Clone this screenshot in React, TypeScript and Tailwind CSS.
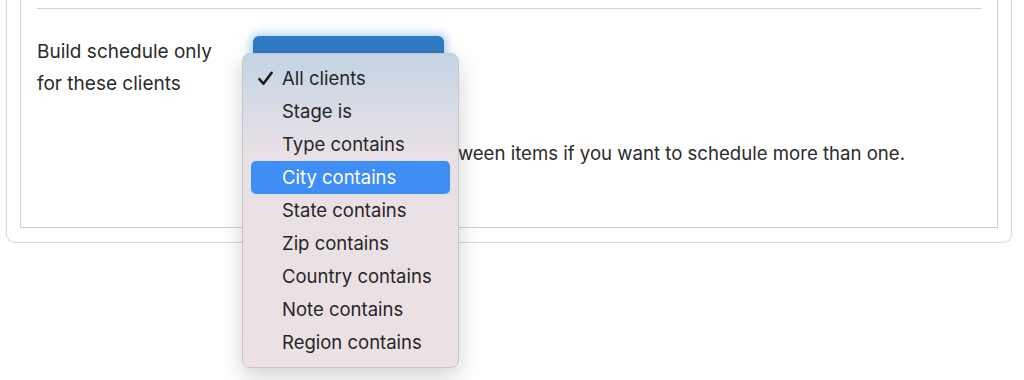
import React from "react";

const options = [
  "All clients",
  "Stage is",
  "Type contains",
  "City contains",
  "State contains",
  "Zip contains",
  "Country contains",
  "Note contains",
  "Region contains",
];

function ClientMenu() {
  return (
    <div className="absolute left-[242px] top-[53px] w-[217px] rounded-[8px] border border-[#c8c4c8] bg-[linear-gradient(180deg,#c3d4e4_0%,#d6dbe5_16%,#e8e0e5_32%,#ece1e5_100%)] py-[8px] text-[18.5px] shadow-[0_8px_22px_rgba(0,0,0,0.18)]">
      {options.map((opt, i) => {
        const selected = opt === "City contains";
        return (
          <div
            key={opt}
            className={`mx-[8px] flex h-[33px] items-center rounded-[5px] pl-[31px] ${
              selected ? "bg-[#3f8ef6] text-white" : "text-[#262626]"
            }`}
          >
            {i === 0 && (
              <svg
                className="-ml-[24px] mr-[9px]"
                width="15"
                height="15"
                viewBox="0 0 14 14"
              >
                <path
                  d="M1.3 7.6 L5.1 11.9 L12.7 1.7"
                  fill="none"
                  stroke="#1c1c1c"
                  strokeWidth="2.4"
                  strokeLinecap="round"
                  strokeLinejoin="round"
                />
              </svg>
            )}
            <span>{opt}</span>
          </div>
        );
      })}
    </div>
  );
}

export default function App() {
  return (
    <div className="relative h-[380px] w-[1024px] overflow-hidden bg-white font-['Inter',sans-serif] text-[19px] text-[#2b2b2b]">
      <div className="-mt-[20px] ml-[6px] w-[1006px] rounded-b-[9px] border border-t-0 border-[#d6d6d6] px-[13px] pb-[14px]">
        <div className="border border-t-0 border-[#cfcfcf] px-[16px] pb-[58px] pt-[28px]">
          <div className="border-t border-[#d0d0d0]" />
          <div className="mt-[27px] flex">
            <div className="w-[216px] shrink-0 leading-[32px]">
              Build schedule only
              <br />
              for these clients
            </div>
            <div className="flex flex-col">
              <div className="h-[60px] w-[191px] rounded-[6px] bg-[#2f7bc4] shadow-[0_0_8px_3px_rgba(90,160,230,0.45)]" />
              <div className="mt-[41px] whitespace-nowrap text-[18.6px] leading-[32px]">
                Hold Cmd and click between items if you want to schedule more
                than one.
              </div>
            </div>
          </div>
        </div>
      </div>
      <ClientMenu />
    </div>
  );
}
